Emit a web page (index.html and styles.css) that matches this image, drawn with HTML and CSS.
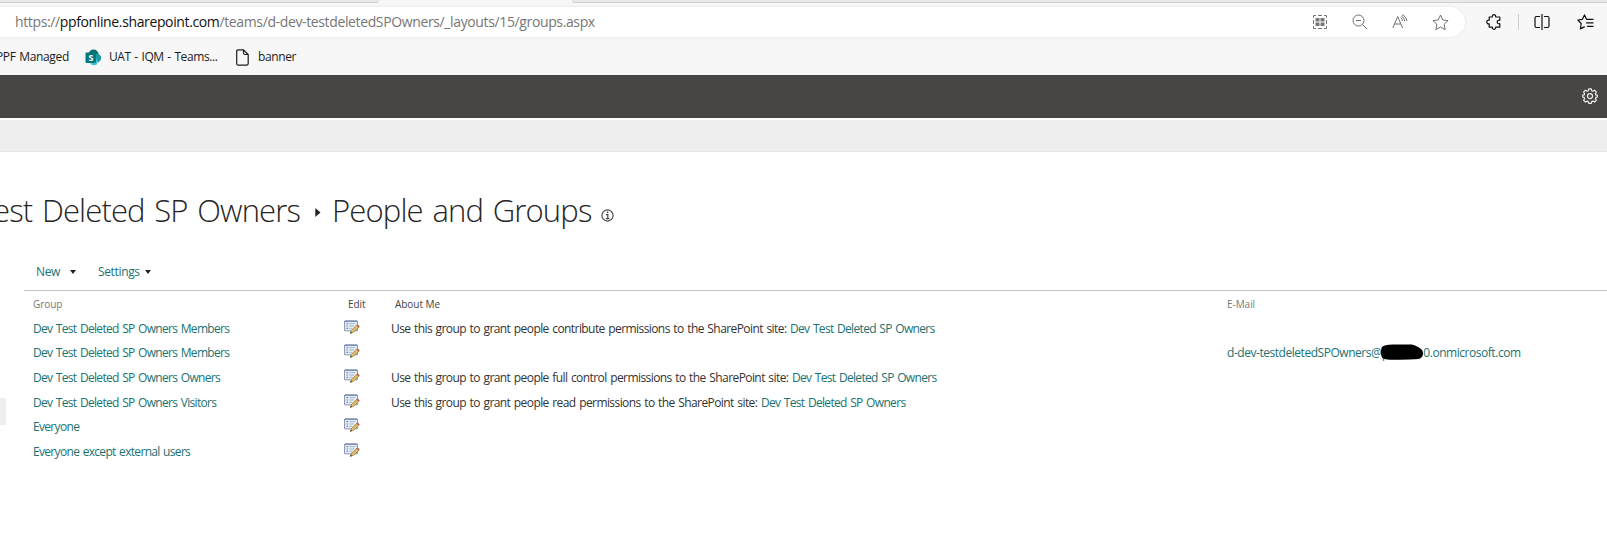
FILE: index.html
```html
<!DOCTYPE html>
<html lang="en">
<head>
<meta charset="utf-8">
<title>People and Groups</title>
<link rel="stylesheet" href="styles.css">
</head>
<body>
<svg class="defs" width="0" height="0">
  <symbol id="edit" viewBox="0 0 16 14">
    <path d="M.6 1h12.800v9.800H.6z" fill="#e9eff8" stroke="#8493ad"/>
    <path d="M1 1.200h12" stroke="#6f83a8" stroke-width="1.200"/>
    <path d="M2.500 3.700h1.600M2.500 6h1.600M2.500 8.300h1.600" stroke="#6b84b0" stroke-width="1.200"/>
    <path d="M5.300 3.700h6M5.300 6h5M5.300 8.300h3" stroke="#a3b2c9"/>
    <path d="M6.300 13.300l1.200-3L13 5.200l2.200 1.800-5.800 5.300z" fill="#e2bd62" stroke="#8d7543" stroke-width=".7"/>
    <path d="M12.400 5.600l1.200-1.100 2.100 1.800-1.200 1.200z" fill="#b35d52"/>
    <path d="M6.100 13.500l.7-1.800 1.400 1.200z" fill="#333"/>
  </symbol>
</svg>

<header class="browser">
  <div class="tabs"><span class="tab tab-left"></span><span class="tab-active"></span><span class="tab tab-right"></span></div>
  <div class="toolbar">
    <div class="address">
      <span class="url">https://<span class="host">ppfonline.sharepoint.com</span>/teams/d-dev-testdeletedSPOwners/_layouts/15/groups.aspx</span>
      <div class="address-icons">
        <svg width="16" height="16" viewBox="0 0 16 16" fill="none" stroke="#777"><path d="M1.500 4V1.500H4M6 1.500h4M12 1.500h2.500V4M14.500 12v2.500H12M10 14.500H6M4 14.500H1.500V12M1.500 10V6M14.500 6v4"/><path d="M3.500 4h4v3.500h-4zM8.500 4h4v3.500h-4zM3.500 8.500h4v3.500h-4zM8.500 8.500h4v3.500h-4z" fill="#777" stroke="none"/></svg>
        <svg width="16" height="16" viewBox="0 0 16 16" fill="none" stroke="#707070"><circle cx="6.500" cy="6.500" r="5.500"/><path d="M4 6.500h5M10.400 10.400l4.800 4.800"/></svg>
        <svg width="16" height="16" viewBox="0 0 16 16" fill="none" stroke="#707070"><path d="M.8 14L5.700 2.500 10.600 14M2.500 10h6.400M8.700 3.700c1.100.8 1.700 1.900 1.700 3.300M10 .8c2.800 1 4.600 3.200 4.800 6.200M9.400 2.200c2 1 3.100 2.500 3.200 4.800"/></svg>
        <svg width="17" height="17" viewBox="0 0 17 17" fill="none" stroke="#707070" stroke-linejoin="round"><path d="M8.500 1l2.200 4.900 5.400.7-4 3.600 1.100 5.500-4.700-2.700-4.700 2.700 1.100-5.500-4-3.600 5.400-.7z"/></svg>
      </div>
    </div>
    <div class="actions">
      <svg width="16" height="16" viewBox="0 0 16 16" fill="none" stroke="#111" stroke-width="1.200" stroke-linejoin="round"><path d="M3.200 3h3.100c-.2-1.400.5-2.300 1.700-2.300s1.900.9 1.700 2.300h4.100v3.300c-1.600-.3-2.600.5-2.600 1.700s1 2 2.600 1.700v3.500H9.700c.2 1.300-.5 2.100-1.700 2.100s-1.900-.8-1.700-2.100H3.200V9.800C1.700 10 .8 9.200.8 8s.9-2 2.400-1.700z"/></svg>
      <span class="divider"></span>
      <svg width="16" height="16" viewBox="0 0 16 16" fill="none" stroke="#111" stroke-width="1.200"><path d="M8 0v16M6 2.500H2.400Q1 2.500 1 4v8q0 1.500 1.400 1.500H6M10 2.500h3.600Q15 2.500 15 4v8q0 1.500-1.400 1.500H10"/></svg>
      <svg class="fav" width="17" height="16" viewBox="0 0 17 16" fill="none" stroke="#111" stroke-width="1.200" stroke-linejoin="round"><path d="M11.600 5.300H9.500L7.500.9 5.400 5.300.8 6l3.400 3.500-.8 5.400 4.300-2.300M10.500 5.300h6M9 8.800h7.500M10 12.300h6.500"/></svg>
    </div>
  </div>
  <nav class="bookmarks">
    <span class="bm-first">PPF Managed</span>
    <svg class="sp" width="17" height="17" viewBox="0 0 17 17"><circle cx="8.500" cy="5.500" r="5" fill="#036c70"/><circle cx="12" cy="9" r="4.200" fill="#1a9ba1"/><circle cx="9" cy="12.700" r="3.600" fill="#37c6d0"/><rect x=".5" y="3.500" width="10.500" height="10.500" rx="1" fill="#03787c"/><text x="5.700" y="11.700" text-anchor="middle" class="sp-s">S</text></svg>
    <span class="bm-uat">UAT - IQM - Teams...</span>
    <svg class="doc" width="13" height="17" viewBox="0 0 13 17" fill="none" stroke="#1b1b1b" stroke-width="1.200" stroke-linejoin="round"><path d="M2.200.8h5.300l4.700 4.700v9q0 1.700-1.700 1.700H2.200Q.7 16.200.7 14.500v-12Q.7.8 2.200.8zM7.500.8V4q0 1.500 1.500 1.500h3.200"/></svg>
    <span class="bm-banner">banner</span>
  </nav>
</header>

<div class="suite-bar">
  <svg width="16" height="16" viewBox="0 0 16 16" fill="none" stroke="#eee" stroke-width="1.200" stroke-linejoin="round"><path d="M6.700.8h2.600l.4 1.900 1.300.5 1.600-1 1.800 1.900-1 1.600.5 1.200 1.400.3v1.800l-1.400.4-.5 1.300 1 1.500-1.800 1.900-1.600-1-1.300.5-.4 1.700H6.700l-.4-1.700-1.300-.5-1.600 1-1.800-1.900 1-1.500-.5-1.300L.7 9V7.200l1.400-.3.5-1.200-1-1.600 1.800-1.900 1.600 1 1.300-.5z"/><circle cx="8" cy="8.100" r="2.500"/></svg>
</div>
<div class="ribbon"></div>

<main class="content">
  <h1 class="title">
    <span class="site">est Deleted SP Owners</span>
    <svg class="crumb" width="6" height="9" viewBox="0 0 6 9"><path d="M.3 0L5.500 4.500.3 9z" fill="#222"/></svg>
    <span class="page">People and Groups</span>
    <svg class="info" width="13" height="13" viewBox="0 0 13 13" fill="none" stroke="#444"><circle cx="6.500" cy="6.500" r="5.600" stroke-width="1.100"/><path d="M5 5.600h1.800v4M4.800 9.600h3.600" stroke-width="1.200"/><path d="M5.800 3.300h1.500" stroke-width="1.500"/></svg>
  </h1>
  <div class="side-mark"></div>
  <div class="menu">
    <a class="m-new">New</a><i class="caret"></i>
    <a class="m-set">Settings</a><i class="caret"></i>
  </div>
  <div class="grid">
    <div class="row head"><span class="h-group">Group</span><span class="h-edit">Edit</span><span class="h-about">About Me</span><span class="h-mail">E-Mail</span></div>
    <div class="row"><a class="name">Dev Test Deleted SP Owners Members</a><svg class="ed"><use href="#edit"/></svg><p>Use this group to grant people contribute permissions to the SharePoint site: <a>Dev Test Deleted SP Owners</a></p></div>
    <div class="row r24"><a class="name">Dev Test Deleted SP Owners Members</a><svg class="ed"><use href="#edit"/></svg><p></p><a class="mail">d-dev-testdeletedSPOwners@<svg class="redact" width="42" height="18" viewBox="0 0 42 18"><text x="1" y="13.500" fill="#1b7272" font-size="12">p</text><path d="M1 3Q3 .8 12 .6L31 .5q4 1 7 3 4 2 4 6t-4 5.500q-10 .8-22 .7Q5 15.900 2 14.500 0 13 0 8.500T1 3z" fill="#000"/></svg>0.onmicrosoft.com</a></div>
    <div class="row"><a class="name">Dev Test Deleted SP Owners Owners</a><svg class="ed"><use href="#edit"/></svg><p>Use this group to grant people full control permissions to the SharePoint site: <a>Dev Test Deleted SP Owners</a></p></div>
    <div class="row"><a class="name">Dev Test Deleted SP Owners Visitors</a><svg class="ed"><use href="#edit"/></svg><p>Use this group to grant people read permissions to the SharePoint site: <a>Dev Test Deleted SP Owners</a></p></div>
    <div class="row r24"><a class="name">Everyone</a><svg class="ed"><use href="#edit"/></svg></div>
    <div class="row"><a class="name">Everyone except external users</a><svg class="ed"><use href="#edit"/></svg></div>
  </div>
</main>
</body>
</html>
```
FILE: styles.css
```css
* { box-sizing: border-box; }
body {
  margin: 0; width: 1607px; height: 540px; overflow: hidden; background: #fff; color: #333;
  font: 12px/24px "Open Sans", "Noto Sans", sans-serif; white-space: nowrap;
}
svg { display: block; flex: none; }
.defs { position: absolute; }
.browser { height: 75px; background: #f7f7f7; }
.tabs { display: flex; height: 3px; }
.tab { background: #e8e8e8; border-bottom: 1px solid #cfcfcf; }
.tab-left { width: 379px; border-bottom-right-radius: 3px; }
.tab-active { width: 193px; }
.tab-right { flex: 1; border-bottom-left-radius: 3px; }
.toolbar { display: flex; height: 34px; padding-top: 4px; }
.address {
  display: flex; align-items: center; justify-content: space-between; width: 1465px; height: 30px;
  padding: 0 16px 0 15px; background: #fff; border-radius: 0 15px 15px 0; box-shadow: 0 0 3px #e2e2e2;
}
.url { font-size: 14px; color: #767676; letter-spacing: -.37px; }
.host { color: #111; }
.address-icons { display: flex; gap: 24px; align-items: center; }
.actions { display: flex; align-items: center; margin-left: 21px; }
.divider { width: 1px; height: 16px; margin: 0 15px 0 16px; background: #ccc; }
.fav { margin-left: 27px; }
.bookmarks { display: flex; align-items: center; height: 38px; padding-top: 2px; color: #1b1b1b; letter-spacing: -.4px; word-spacing: .9px; }
.bm-first { width: 72px; margin-left: -4px; letter-spacing: -.35px; }
.sp { margin-left: 17px; }
.sp-s { font: bold 9px "Open Sans", sans-serif; fill: #fff; }
.bm-uat { width: 109px; margin-left: 7px; }
.doc { margin-left: 18px; }
.bm-banner { margin-left: 9px; }
.suite-bar { display: flex; align-items: center; justify-content: flex-end; height: 43px; padding: 0 9px 1px 0; background: #484644; }
.ribbon { height: 32px; margin-top: 2px; background: #eee; border-bottom: 1px solid #e6e6e6; }
.content { display: flow-root; position: relative; }
.title { display: flex; align-items: center; height: 50px; margin: 33px 0 0 -7px; font-size: 31px; font-weight: 300; line-height: 50px; color: #262626; letter-spacing: -.87px; word-spacing: 2.500px; }
.site { width: 307px; }
.crumb { margin: 5px 11px 0 15px; }
.page { width: 260px; letter-spacing: -.85px; }
.info { margin: 10px 0 0 9px; }
.side-mark { position: absolute; left: 0; top: 246px; width: 6px; height: 27px; background: #eee; }
.menu { display: flex; align-items: center; height: 24px; margin-top: 25px; padding-left: 36px; letter-spacing: -.35px; }
.menu a, .grid a { color: #1b7272; }
.m-new { width: 34px; }
.m-set { width: 47px; margin-left: 22px; }
.caret { border: 3px solid transparent; border-top: 4px solid #222; border-bottom: 0; }
.grid { margin: 6px 0 0 24px; border-top: 1px solid #c4c4c4; letter-spacing: -.58px; word-spacing: 1px; }
.row { display: grid; grid-template-columns: 311px 47px 836px 1fr; align-items: center; height: 25px; padding-left: 9px; }
.r24 { height: 24px; }
.head { height: 25px; font-size: 10px; color: #444; letter-spacing: -.05px; word-spacing: 0; }
.h-group, .h-mail { padding-top: 1px; color: #777; }
.h-edit { padding-left: 4px; }
.h-about { padding-left: 4px; }
.name { letter-spacing: -.68px; }
.row p { margin: 0; }
.row p a { letter-spacing: -.67px; }
.ed { width: 16px; height: 14px; margin-bottom: 4px; }
.mail { display: flex; align-items: center; letter-spacing: -.46px; }
.redact { margin: -1px 0 0; }
```
